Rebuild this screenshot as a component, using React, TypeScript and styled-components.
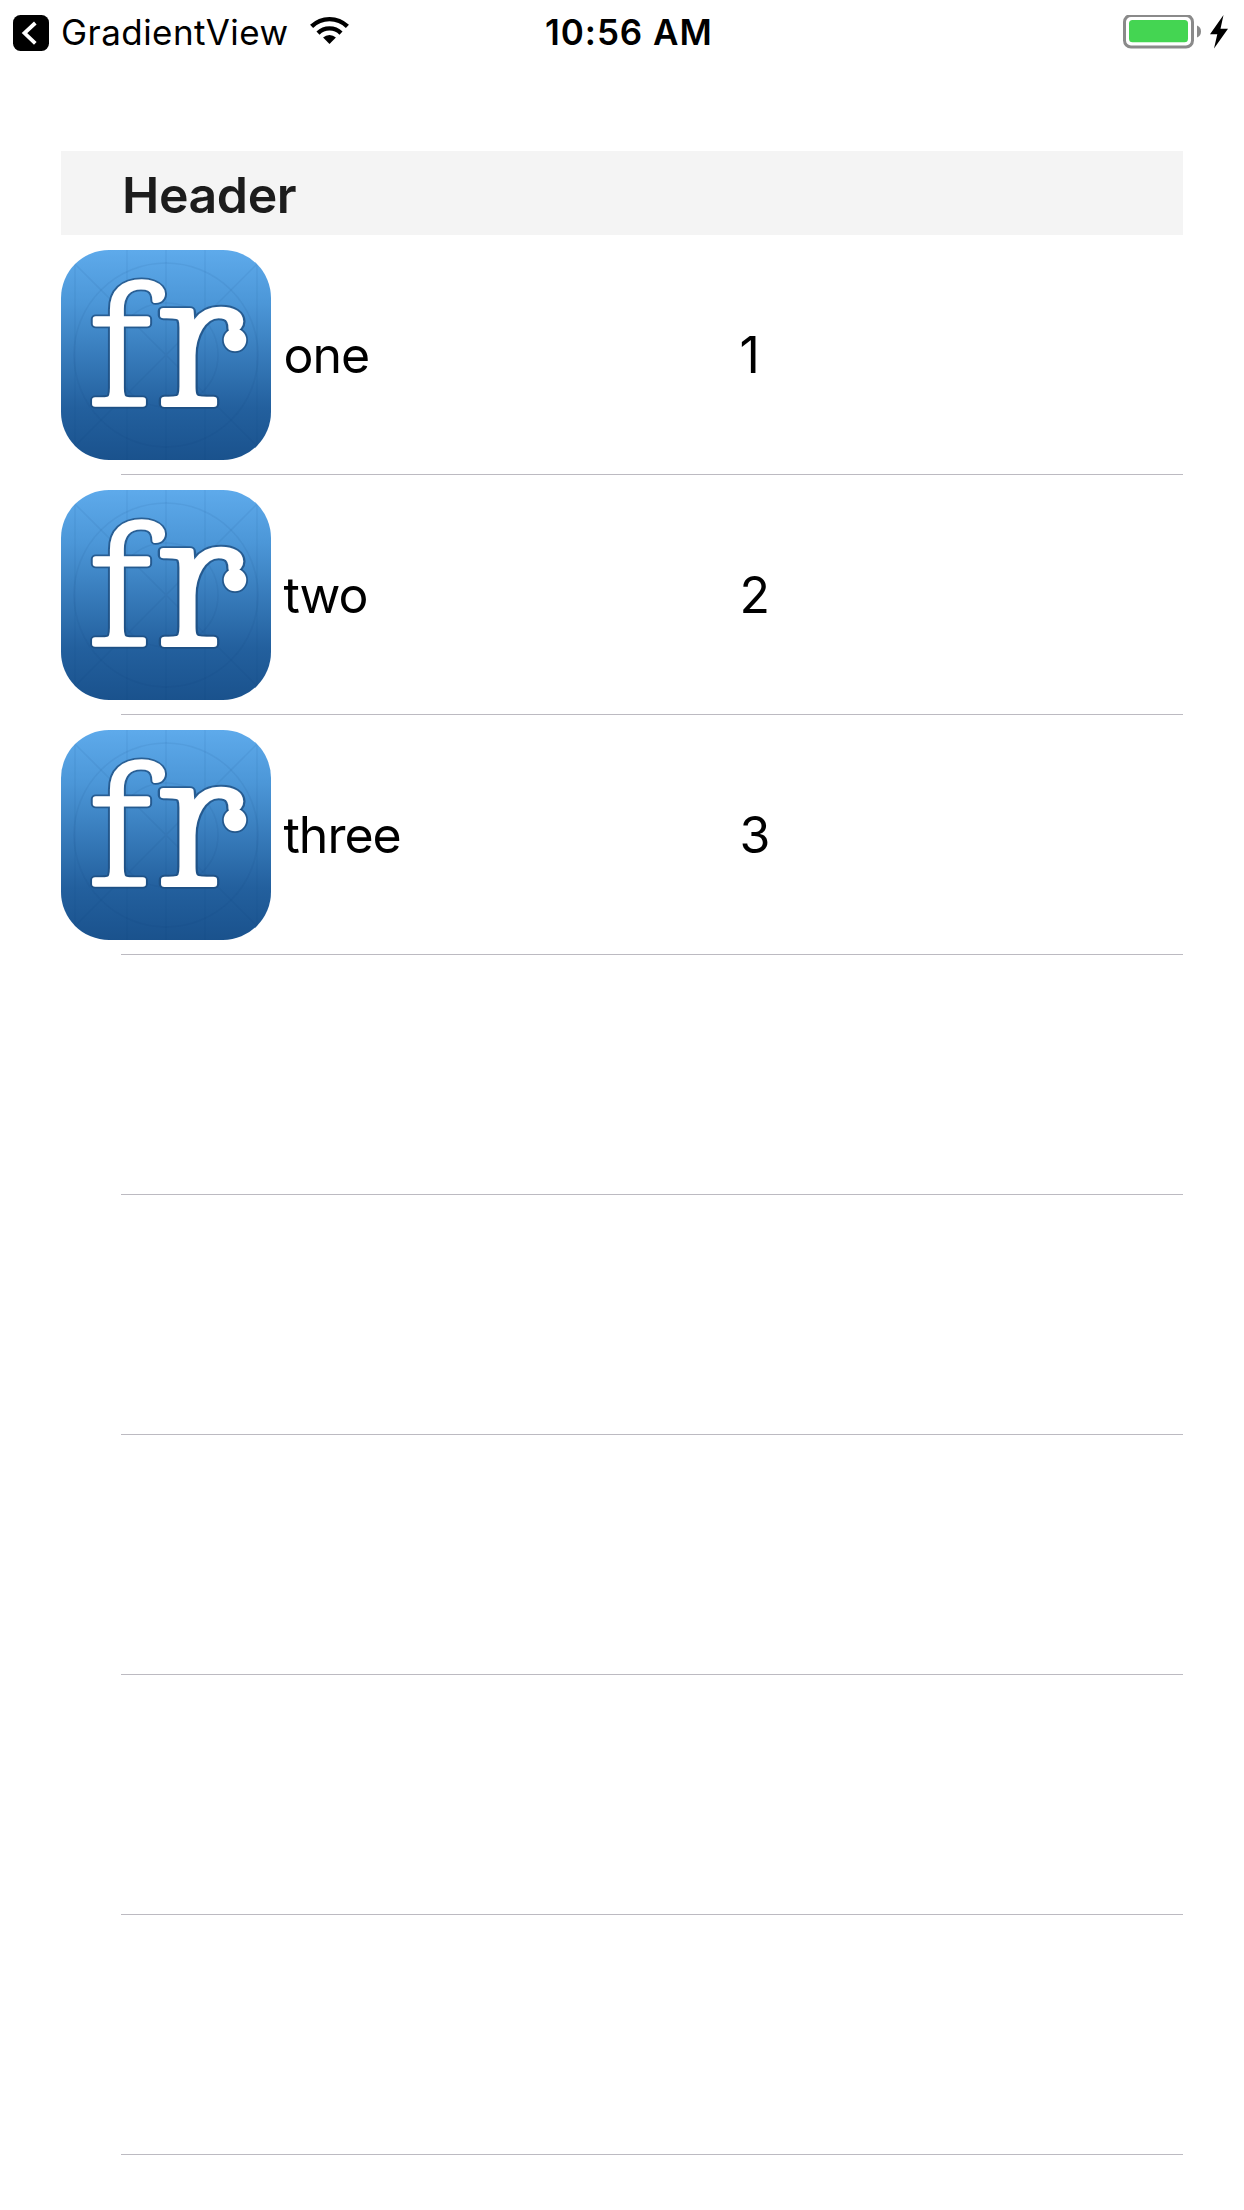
import React from "react";
import styled, { createGlobalStyle } from "styled-components";

const GlobalStyle = createGlobalStyle`
  * { box-sizing: border-box; }
  body { margin: 0; background: #fff; }
`;

const Screen = styled.main`
  display: flex;
  flex-direction: column;
  width: 1244px;
  height: 2210px;
  overflow: hidden;
  background: #fff;
  color: #000;
  font-family: Inter, "Liberation Sans", sans-serif;
`;

const StatusBar = styled.header`
  display: grid;
  grid-template-columns: 545px 1fr auto;
  align-items: center;
  flex: none;
  height: 66px;
  padding-right: 16px;
  font-size: 35px;
  line-height: 64px;
`;

const StatusGroup = styled.div`
  display: flex;
  align-items: center;
`;

const BackGroup = styled(StatusGroup)`
  padding-left: 13px;
`;

const BackLabel = styled.span`
  width: 249px;
  margin-left: 12px;
  padding-bottom: 2px;
  letter-spacing: 0.45px;
  white-space: nowrap;
`;

const Clock = styled.time`
  padding-bottom: 2px;
  font-weight: 600;
  letter-spacing: 0.95px;
  white-space: nowrap;
`;

const Table = styled.section`
  display: flex;
  flex-direction: column;
  margin: 85px 61px 0;
`;

const SectionHeader = styled.h2`
  flex: none;
  height: 84px;
  margin: 0;
  padding-left: 61px;
  background: #f4f4f4;
  color: #1c1c1c;
  font-size: 50px;
  font-weight: 600;
  letter-spacing: -0.4px;
  line-height: 88px;
`;

const Row = styled.div`
  display: grid;
  grid-template-columns: 222.5px 456px 1fr;
  align-items: center;
  flex: none;
  height: 240px;
  background: linear-gradient(#bcbac1, #bcbac1) 60px 100% / 100% 1px no-repeat;
`;

const Cell = styled.span`
  font-size: 50px;
  letter-spacing: -1px;
  line-height: 60px;
`;

const Tile = styled.svg`
  display: block;
  overflow: visible;
`;

const Letter = styled.text`
  font-family: "Noto Serif", "DejaVu Serif", serif;
  font-size: 160px;
  font-weight: 200;
`;

const Lettering = () => (
  <>
    <Letter transform="translate(28 154) scale(1.14 0.99)">f</Letter>
    <Letter transform="translate(94 154) scale(1.31 1.08)">r</Letter>
    <circle cx="174" cy="90" r="8.5" />
  </>
);

const AppIcon = () => (
  <Tile width="210" height="210" viewBox="0 0 210 210">
    <defs>
      <linearGradient id="tile" x1="0" y1="0" x2="0" y2="1">
        <stop offset="0" stopColor="#5eaaeb" />
        <stop offset="0.25" stopColor="#4c97d8" />
        <stop offset="0.75" stopColor="#23609e" />
        <stop offset="1" stopColor="#1a528d" />
      </linearGradient>
      <clipPath id="tileClip">
        <rect width="210" height="210" rx="48" />
      </clipPath>
    </defs>
    <rect width="210" height="210" rx="48" fill="url(#tile)" />
    <g clipPath="url(#tileClip)" fill="none" stroke="#123f72" strokeOpacity="0.07" strokeWidth="1.5">
      <path d="M14 0V210M66 0V210M105 0V210M144 0V210M196 0V210M0 0 210 210M210 0 0 210" />
      <circle cx="105" cy="105" r="92" />
      <circle cx="105" cy="105" r="52" />
    </g>
    <g fill="#1c4b7c" stroke="#1c4b7c" strokeOpacity="0.75" strokeWidth="9" strokeLinejoin="round">
      <Lettering />
    </g>
    <g fill="#fff" stroke="#fff" strokeWidth="5.5" strokeLinejoin="round">
      <Lettering />
    </g>
  </Tile>
);

const BackIcon = () => (
  <svg width="36" height="36" viewBox="0 0 36 36">
    <rect width="36" height="36" rx="7.5" />
    <path d="M22.3 8 11.5 18 22.3 28.3" fill="none" stroke="#fff" strokeWidth="3.8" />
  </svg>
);

const WifiIcon = () => (
  <svg width="39" height="36" viewBox="0 0 39 36">
    <g fill="none" stroke="#000" strokeWidth="4.4">
      <path d="M1.6 11.4A25.6 25.6 0 0 1 37.4 11.4" />
      <path d="M8 18.1A16.4 16.4 0 0 1 31 18.1" />
    </g>
    <path d="M19.5 29 13.1 22.6A9.1 9.1 0 0 1 25.9 22.6Z" />
  </svg>
);

const BatteryIcon = () => (
  <svg width="105" height="36" viewBox="0 0 105 36">
    <rect x="1.5" y="0.5" width="68" height="31.5" rx="6.5" fill="none" stroke="#8a8a8a" strokeWidth="3" />
    <rect x="6" y="5" width="59" height="22.3" rx="3.5" fill="#44d552" />
    <path d="M74 10.5A6.5 6.5 0 0 1 74 22.5Z" fill="#8a8a8a" />
    <path d="M100.5 0 87 19.3H94.3L91 33.5 105 13.7H97.5Z" />
  </svg>
);

const rows = [
  { name: "one", value: "1" },
  { name: "two", value: "2" },
  { name: "three", value: "3" },
  null,
  null,
  null,
  null,
  null,
];

export default function App() {
  return (
    <>
      <GlobalStyle />
      <Screen>
        <StatusBar>
          <BackGroup>
            <BackIcon />
            <BackLabel>GradientView</BackLabel>
            <WifiIcon />
          </BackGroup>
          <Clock>10:56 AM</Clock>
          <StatusGroup>
            <BatteryIcon />
          </StatusGroup>
        </StatusBar>
        <Table>
          <SectionHeader>Header</SectionHeader>
          {rows.map((row, i) => (
            <Row key={i}>
              {row && (
                <>
                  <AppIcon />
                  <Cell>{row.name}</Cell>
                  <Cell>{row.value}</Cell>
                </>
              )}
            </Row>
          ))}
        </Table>
      </Screen>
    </>
  );
}
